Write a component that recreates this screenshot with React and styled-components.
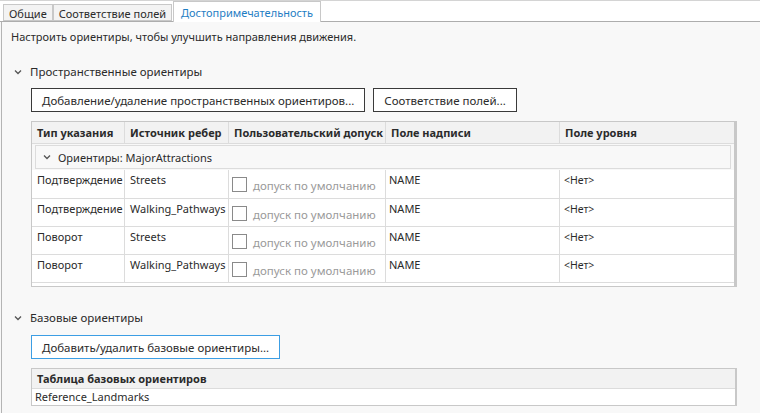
import styled, { createGlobalStyle } from "styled-components";

const GlobalStyle = createGlobalStyle`
  html, body {
    margin: 0;
    padding: 0;
    background: #f8f8f8;
  }
  body {
    font-family: "Noto Sans", "Open Sans", sans-serif;
    font-size: 11px;
    color: #2b2b2b;
  }
`;

const columns = [
  { title: "Тип указания", width: 93 },
  { title: "Источник ребер", width: 104 },
  { title: "Пользовательский допуск", width: 157 },
  { title: "Поле надписи", width: 174 },
  { title: "Поле уровня", width: 174 },
];

const rows = [
  { type: "Подтверждение", source: "Streets" },
  { type: "Подтверждение", source: "Walking_Pathways" },
  { type: "Поворот", source: "Streets" },
  { type: "Поворот", source: "Walking_Pathways" },
];

const Chevron = () => (
  <svg width="8" height="6" viewBox="0 0 8 6">
    <path d="M1 1.5 L4 4.5 L7 1.5" fill="none" stroke="#555" strokeWidth="1.3" />
  </svg>
);

const App = () => {
  return (
    <>
      <GlobalStyle />
      <Page>
        <TabBar>
          <Tab>Общие</Tab>
          <Tab>Соответствие полей</Tab>
          <Tab $active>Достопримечательность</Tab>
        </TabBar>

        <Panel>
          <Intro>Настроить ориентиры, чтобы улучшить направления движения.</Intro>

          <SectionHeader $top={19}>
            <Chevron />
            <span>Пространственные ориентиры</span>
          </SectionHeader>

          <ButtonRow $top={8}>
            <Button>Добавление/удаление пространственных ориентиров...</Button>
            <Button>Соответствие полей...</Button>
          </ButtonRow>

          <Grid>
            <HeaderRow>
              {columns.map((c) => (
                <HeaderCell key={c.title} $w={c.width}>
                  {c.title}
                </HeaderCell>
              ))}
            </HeaderRow>
            <GroupWrap>
              <GroupRow>
                <Chevron />
                <span>Ориентиры: MajorAttractions</span>
              </GroupRow>
            </GroupWrap>
            {rows.map((r, i) => (
              <DataRow key={i} $first={i === 0}>
                <Cell $w={93}>{r.type}</Cell>
                <Cell $w={104}>{r.source}</Cell>
                <Cell $w={157}>
                  <Tolerance>
                    <Check />
                    <Muted>допуск по умолчанию</Muted>
                  </Tolerance>
                </Cell>
                <Cell $w={174} $pad={3}>NAME</Cell>
                <Cell $w={174} $pad={4}>
                  <Small>&lt;Нет&gt;</Small>
                </Cell>
              </DataRow>
            ))}
            <GridFoot />
          </Grid>

          <SectionHeader $top={23}>
            <Chevron />
            <span>Базовые ориентиры</span>
          </SectionHeader>

          <ButtonRow $top={9}>
            <Button $focused>Добавить/удалить базовые ориентиры...</Button>
          </ButtonRow>

          <BaseTable>
            <BaseHead>Таблица базовых ориентиров</BaseHead>
            <BaseRow>Reference_Landmarks</BaseRow>
          </BaseTable>
        </Panel>
      </Page>
    </>
  );
};

export default App;

const Page = styled.div`
  width: 760px;
  height: 413px;
  overflow: hidden;
  display: flex;
  flex-direction: column;
`;

const TabBar = styled.div`
  display: flex;
  align-items: flex-end;
  height: 20px;
  padding-left: 3px;
  background: #fff;
  border-top: 1px solid #d4d4d4;
  border-bottom: 1px solid #adadad;
`;

const Tab = styled.div`
  height: ${(p) => (p.$active ? "21px" : "17px")};
  margin-bottom: ${(p) => (p.$active ? "-1px" : "0")};
  margin-left: ${(p) => (p.$active ? "1px" : "0")};
  padding: ${(p) => (p.$active ? "0 7px" : "1px 5px 0")};
  box-sizing: border-box;
  display: flex;
  align-items: center;
  background: ${(p) => (p.$active ? "#fff" : "#f3f3f3")};
  border: 1px solid #c8c8c8;
  border-bottom: ${(p) => (p.$active ? "none" : "1px solid #c8c8c8")};
  color: ${(p) => (p.$active ? "#1f7ec4" : "#2b2b2b")};
  font-size: 11px;

  & + & {
    border-left: ${(p) => (p.$active ? "1px solid #c8c8c8" : "none")};
  }
`;

const Panel = styled.div`
  flex: 1;
  border-left: 1px solid #b4b4b4;
  margin-left: 1px;
  padding: 0 0 0 29px;
  background: #f8f8f8;
`;

const Intro = styled.div`
  margin: 7px 0 0 -20px;
  line-height: 16px;
  font-size: 11px;
`;

const SectionHeader = styled.div`
  display: flex;
  align-items: center;
  gap: 8px;
  margin: ${(p) => p.$top}px 0 0 -17px;
  height: 16px;
  line-height: 16px;
  font-size: 11.5px;
`;

const ButtonRow = styled.div`
  display: flex;
  gap: 8px;
  margin-top: ${(p) => p.$top}px;
`;

const Button = styled.button`
  height: 24px;
  padding: 0 10px;
  background: #fff;
  border: 1px solid ${(p) => (p.$focused ? "#3c9ee4" : "#3a3a3a")};
  font-family: inherit;
  font-size: 11.5px;
  color: #2b2b2b;
  cursor: pointer;
`;

const Grid = styled.div`
  margin-top: 9px;
  width: 706px;
  box-sizing: border-box;
  border: 1px solid #c8c8c8;
  border-right-width: 3px;
  background: #f8f8f8;
`;

const HeaderRow = styled.div`
  display: flex;
  height: 21px;
  background: #f2f2f2;
  border-bottom: 1px solid #dcdcdc;
`;

const HeaderCell = styled.div`
  width: ${(p) => p.$w}px;
  box-sizing: border-box;
  padding-left: 5px;
  display: flex;
  align-items: center;
  font-weight: 700;
  white-space: nowrap;
  overflow: hidden;
  border-right: 1px solid #dcdcdc;
  &:last-child {
    border-right: none;
  }
`;

const GroupWrap = styled.div`
  padding: 1px 3px 1px;
`;

const GroupRow = styled.div`
  height: 22px;
  display: flex;
  align-items: center;
  gap: 7px;
  padding-left: 7px;
  border: 1px solid #dcdcdc;
  background: #f8f8f8;
`;

const DataRow = styled.div`
  display: flex;
  background: #fff;
  border-top: ${(p) => (p.$first ? "none" : "1px solid #dcdcdc")};
  height: ${(p) => (p.$first ? "28px" : "27px")};
`;

const Cell = styled.div`
  width: ${(p) => p.$w}px;
  box-sizing: border-box;
  padding: 2px 0 0 ${(p) => p.$pad ?? 5}px;
  border-right: 1px solid #dcdcdc;
  white-space: nowrap;
  overflow: hidden;
  &:last-child {
    border-right: none;
  }
`;

const Tolerance = styled.div`
  display: flex;
  align-items: center;
  gap: 6px;
  padding-top: 4px;
  margin-left: -2px;
`;

const Check = styled.span`
  width: 13px;
  height: 13px;
  border: 1px solid #8a8a8a;
  background: #fff;
  flex: none;
`;

const Muted = styled.span`
  color: #9a9a9a;
  padding-top: 2px;
  font-size: 11.5px;
`;

const Small = styled.span`
  font-size: 10.5px;
`;

const GridFoot = styled.div`
  height: 3px;
  background: #fff;
  border-top: 1px solid #dcdcdc;
`;

const BaseTable = styled.div`
  margin-top: 9px;
  width: 706px;
  box-sizing: border-box;
  border: 1px solid #c8c8c8;
  border-right-width: 2px;
`;

const BaseHead = styled.div`
  height: 19px;
  line-height: 19px;
  padding-left: 5px;
  font-weight: 700;
  background: #f2f2f2;
  border-bottom: 1px solid #dcdcdc;
`;

const BaseRow = styled.div`
  height: 16px;
  line-height: 16px;
  padding-left: 3px;
  background: #fff;
`;
